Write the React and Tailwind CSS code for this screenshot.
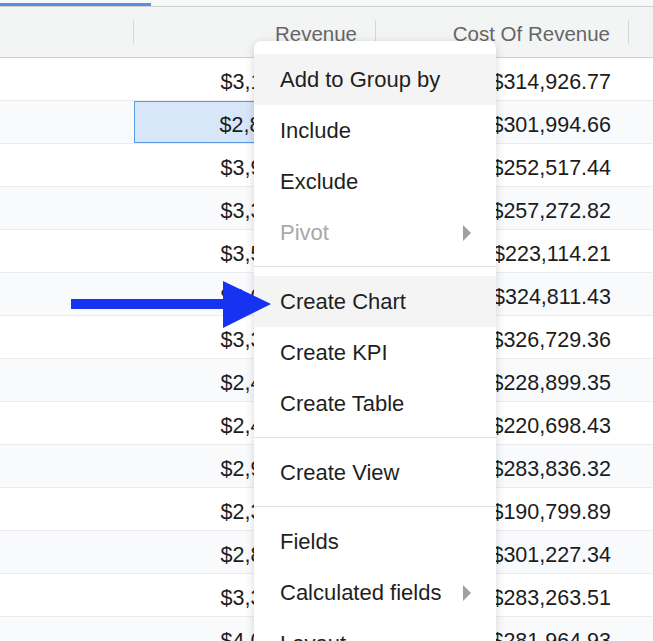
import { Fragment } from "react"

const rows = [
  { rev: "$3,142,518.06", cost: "$314,926.77" },
  { rev: "$2,876,304.51", cost: "$301,994.66" },
  { rev: "$3,915,227.80", cost: "$252,517.44" },
  { rev: "$3,361,092.15", cost: "$257,272.82" },
  { rev: "$3,548,771.39", cost: "$223,114.21" },
  { rev: "$3,027,480.92", cost: "$324,811.43" },
  { rev: "$3,318,655.27", cost: "$326,729.36" },
  { rev: "$2,467,913.04", cost: "$228,899.35" },
  { rev: "$2,435,106.68", cost: "$220,698.43" },
  { rev: "$2,952,834.71", cost: "$283,836.32" },
  { rev: "$2,381,549.90", cost: "$190,799.89" },
  { rev: "$2,864,217.55", cost: "$301,227.34" },
  { rev: "$3,306,781.13", cost: "$283,263.51" },
  { rev: "$4,012,398.47", cost: "$281,964.93" },
]

const menu = [
  [
    { label: "Add to Group by", active: true },
    { label: "Include" },
    { label: "Exclude" },
    { label: "Pivot", disabled: true, sub: true },
  ],
  [{ label: "Create Chart", active: true }, { label: "Create KPI" }, { label: "Create Table" }],
  [{ label: "Create View" }],
  [{ label: "Fields" }, { label: "Calculated fields", sub: true }, { label: "Layout" }],
]

const Caret = ({ color }) => (
  <svg width="8" height="16" viewBox="0 0 8 16">
    <path d="M0 0 L8 8 L0 16 Z" fill={color} />
  </svg>
)

const App = () => {
  return (
    <div
      className="relative w-[653px] h-[641px] overflow-hidden bg-white"
      style={{ fontFamily: '"Liberation Sans", Arial, sans-serif' }}
    >
      {/* tab strip */}
      <div className="h-[7px] bg-[#f7f8f8] border-b border-[#cfd0d0] pt-[3px]">
        <div className="w-[151px] h-[3px] bg-[#5a8fdc]" />
      </div>

      {/* header */}
      <div className="flex h-[51px] bg-[#f3f4f4] border-b border-[#cfd0d0] text-[20.5px] text-[#666666]">
        <div className="w-[134px] flex items-center justify-end">
          <div className="w-px h-[24px] bg-[#d6d7d7]" />
        </div>
        <div className="w-[242px] flex items-center justify-end">
          <span className="pr-[18px] pt-[4px]">Revenue</span>
          <div className="w-px h-[24px] bg-[#d6d7d7]" />
        </div>
        <div className="w-[253px] flex items-center justify-end">
          <span className="pr-[18px] pt-[4px]">Cost Of Revenue</span>
          <div className="w-px h-[24px] bg-[#d6d7d7]" />
        </div>
        <div className="flex-1" />
      </div>

      {/* rows */}
      <div className="flex flex-col text-[21.5px] text-[#1c1c1c]">
        {rows.map((r, i) => (
          <div
            key={i}
            className={`flex h-[43px] border-b border-[#ececee] ${
              i % 2 === 1 ? "bg-[#f9fafc]" : "bg-white"
            }`}
          >
            <div className="w-[134px]" />
            <div
              className={`w-[242px] flex items-center justify-end pr-[18px] pt-[6px] ${
                i === 1 ? "bg-[#d7e6f8] border border-[#5b9be6]" : ""
              }`}
            >
              {r.rev}
            </div>
            <div className="w-[253px] flex items-center justify-end pr-[18px] pt-[6px]">{r.cost}</div>
            <div className="flex-1" />
          </div>
        ))}
      </div>

      {/* context menu */}
      <div className="absolute left-[254px] top-[41px] w-[242px] bg-white rounded-[7px] shadow-[0_2px_10px_rgba(0,0,0,0.16)] pt-[13px] text-[22px] text-[#1f1f1f]">
        {menu.map((group, gi) => (
          <Fragment key={gi}>
            {gi > 0 && <div className="h-px bg-[#e2e2e2] mt-[8px] mb-[9px]" />}
            {group.map((item) => (
              <div
                key={item.label}
                className={`h-[51px] flex items-center justify-between pl-[26px] pr-[25px] ${
                  item.active ? "bg-[#f4f4f4]" : ""
                } ${item.disabled ? "text-[#a9a9a9]" : ""}`}
              >
                <span>{item.label}</span>
                {item.sub && <Caret color="#a0a0a0" />}
              </div>
            ))}
          </Fragment>
        ))}
      </div>

      {/* annotation arrow */}
      <svg className="absolute left-0 top-0" width="653" height="641">
        <rect x="71" y="299" width="154" height="10" fill="#1733f2" />
        <path d="M223 281 L271 304 L223 328 Z" fill="#1733f2" />
      </svg>
    </div>
  )
}

export default App
